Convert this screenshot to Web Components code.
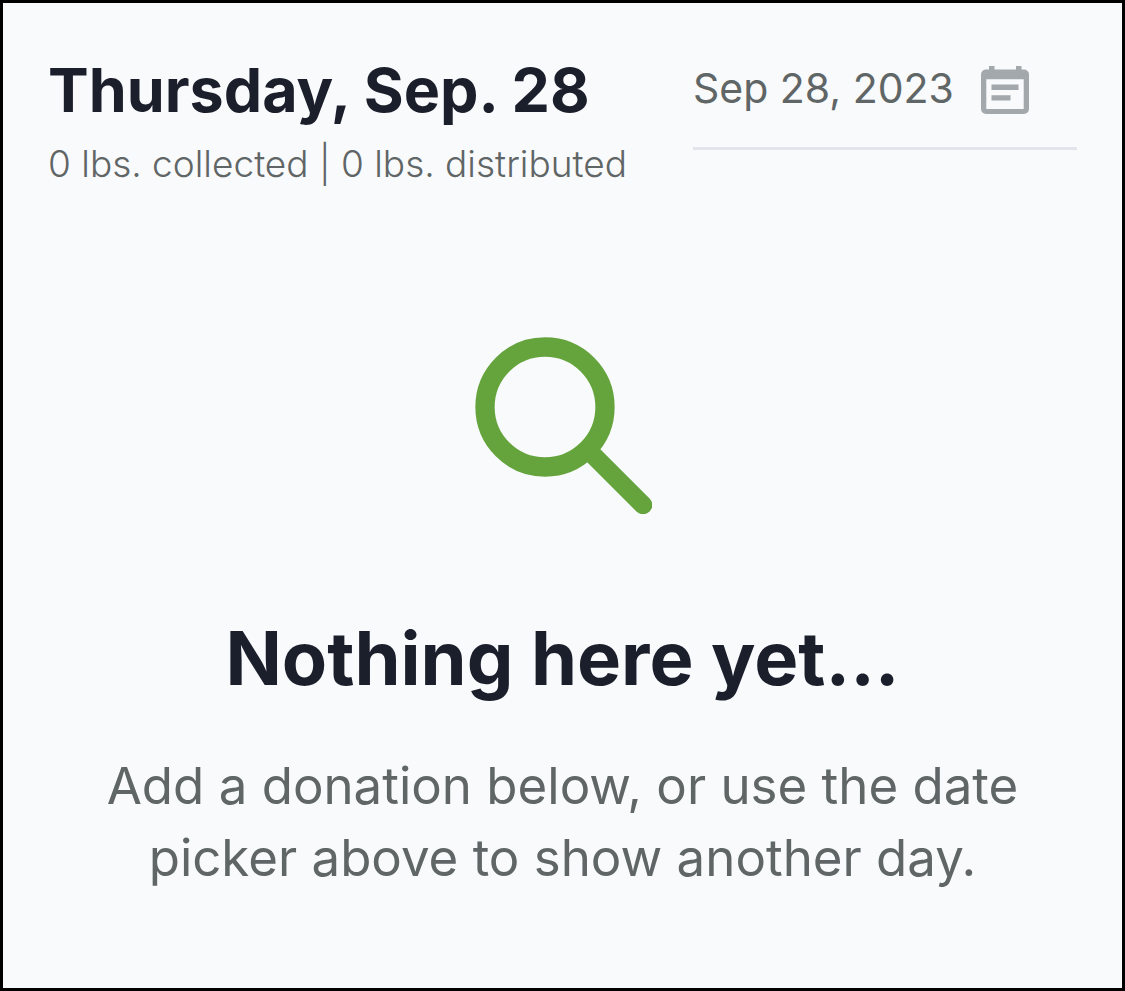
<!DOCTYPE html>
<html lang="en">
<head>
<meta charset="utf-8">
<meta name="viewport" content="width=device-width, initial-scale=1">
<title>Daily donations</title>
<style>
  html, body { margin: 0; background: #f9fafc; }
  body {
    --ink: #1b1e2b;
    --muted: #606566;
    --icon: #a2a8ab;
    --line: #e2e6ec;
    --accent: #65a43d;
    font-family: Inter, "Open Sans", sans-serif;
    color: var(--muted);
  }
</style>
</head>
<body>
<day-page>
  <day-summary slot="header">
    <span slot="day">Thursday, Sep. 28</span>
    <span slot="totals">0 lbs. collected | 0 lbs. distributed</span>
  </day-summary>
  <date-field slot="header" value="Sep 28, 2023"></date-field>
  <empty-state>
    <span slot="title">Nothing here yet...</span>
    Add a donation below, or use the date<br>picker above to show another day.
  </empty-state>
</day-page>

<script>
  const define = (name, html, setup) => {
    const template = document.createElement('template');
    template.innerHTML = html;
    customElements.define(name, class extends HTMLElement {
      constructor() {
        super();
        this.attachShadow({ mode: 'open' }).append(template.content.cloneNode(true));
      }
      connectedCallback() { if (setup) setup(this); }
    });
  };

  define('day-page', `
    <style>
      :host { display: flex; flex-direction: column; box-sizing: border-box; min-height: 100vh; border: 3px solid #000; padding: 45px; background: #f9fafc; }
      header { display: grid; grid-template-columns: minmax(0, 5fr) minmax(0, 3fr); column-gap: 5px; align-items: start; }
      main { margin-top: 140px; }
    </style>
    <header><slot name="header"></slot></header>
    <main><slot></slot></main>`);

  define('day-summary', `
    <style>
      :host { display: block; white-space: nowrap; }
      h1 { margin: 0; font-size: 61px; line-height: 84px; font-weight: 700; color: var(--ink); }
      p { margin: 0; font-size: 37px; line-height: 64px; font-weight: 300; }
    </style>
    <h1><slot name="day"></slot></h1>
    <p><slot name="totals"></slot></p>`);

  define('date-field', `
    <style>
      :host { display: flex; align-items: center; box-sizing: border-box; height: 102px; padding-bottom: 15px; border-bottom: 3px solid var(--line); }
      input { width: 280px; min-width: 0; box-sizing: border-box; padding: 0 0 4px; border: 0; background: none; font: 400 41px/60px Inter, sans-serif; color: inherit; }
      button { display: flex; flex: none; padding: 4px; border: 0; margin: 0 0 0 4px; background: none; color: var(--icon); cursor: pointer; }
      svg { display: block; width: 48px; height: 48px; }
    </style>
    <input type="text" aria-label="Date">
    <button type="button" aria-label="Open calendar">
      <svg viewBox="0 0 48 48" fill="currentColor" aria-hidden="true">
        <path fill-rule="evenodd" d="M8 0h5.500v3.500h21.500V0h5.500v3.500H43a5 5 0 0 1 5 5V43a5 5 0 0 1-5 5H5a5 5 0 0 1-5-5V8.500a5 5 0 0 1 5-5h3zM5.300 13.300v29.700h37.400V13.300z"/>
        <path d="M10.500 18.600h27v5.300h-27zM10.500 29.300h19v5.300h-19z"/>
      </svg>
    </button>`, host => {
      host.shadowRoot.querySelector('input').value = host.getAttribute('value') || '';
    });

  define('empty-state', `
    <style>
      :host { display: flex; flex-direction: column; align-items: center; text-align: center; }
      svg { display: block; width: 178px; height: 178px; }
      h2 { margin: 94px 0 0; font-size: 74px; line-height: 100px; font-weight: 700; color: var(--ink); }
      p { margin: 42px 0 0; font-size: 51px; line-height: 72px; }
    </style>
    <svg viewBox="-1 -1 178 178" fill="none" stroke="var(--accent)" aria-hidden="true">
      <circle cx="70" cy="70" r="60" stroke-width="19.300"/>
      <path d="M113 113l55 55" stroke-width="18.500" stroke-linecap="round"/>
    </svg>
    <h2><slot name="title"></slot></h2>
    <p><slot></slot></p>`);
</script>
</body>
</html>
